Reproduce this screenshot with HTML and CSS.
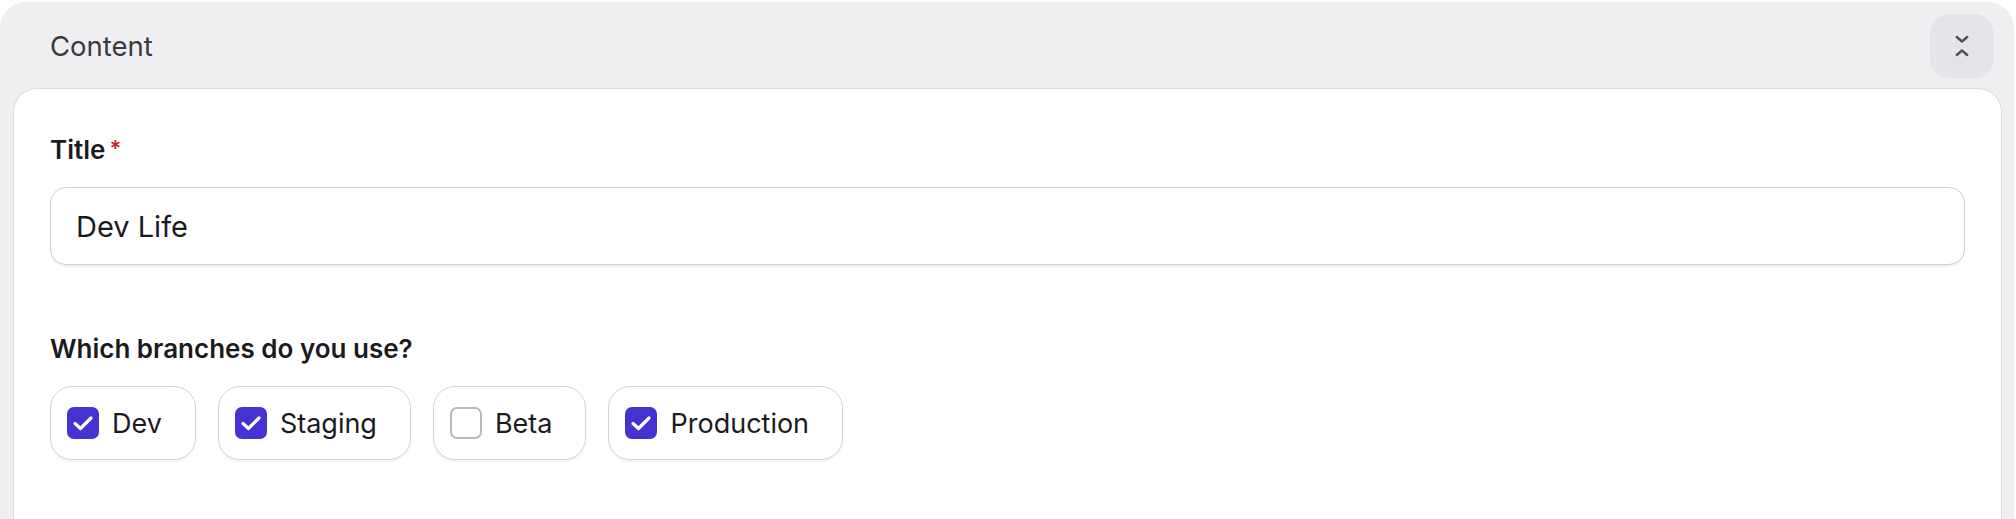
FILE: index.html
```html
<!DOCTYPE html>
<html lang="en">
<head>
  <meta charset="UTF-8">
  <meta name="viewport" content="width=device-width, initial-scale=1">
  <title>Content</title>
  <link rel="stylesheet" href="styles.css">
</head>
<body>
  <section class="panel">
    <header class="panel-header">
      <h2>Content</h2>
      <button class="collapse-btn" aria-label="Collapse">
        <svg width="14" height="22" viewBox="0 0 14 22" fill="none" stroke="#4f4f55" stroke-width="2.4" stroke-linecap="round" stroke-linejoin="round">
          <path d="M1.8 2 L7 6.5 L12.2 2"/>
          <path d="M1.8 20 L7 15.5 L12.2 20"/>
        </svg>
      </button>
    </header>

    <div class="card">
      <div class="field">
        <label class="field-label" for="title">Title<span class="required">*</span></label>
        <input class="text-input" id="title" type="text" value="Dev Life">
      </div>

      <div class="field">
        <div class="field-label">Which branches do you use?</div>
        <div class="options">
          <label class="option"><span class="box checked"></span>Dev</label>
          <label class="option"><span class="box checked"></span>Staging</label>
          <label class="option"><span class="box"></span>Beta</label>
          <label class="option"><span class="box checked"></span>Production</label>
        </div>
      </div>
    </div>
  </section>
</body>
</html>
```

FILE: styles.css
```css
* { box-sizing: border-box; }

body {
  margin: 0;
  background: #ffffff;
  font-family: 'Inter', 'Noto Sans', sans-serif;
  color: #1b1b1f;
}

.panel {
  margin: 2px 2px 0 0;
  background: #efeff1;
  border-radius: 26px 26px 0 0;
  padding: 0 12px 0 13px;
  min-height: 560px;
}

.panel-header {
  display: flex;
  align-items: center;
  justify-content: space-between;
  padding: 12px 8px 10px 37px;
}

.panel-header h2 {
  margin: 0;
  font-size: 27.5px;
  font-weight: 400;
  color: #3a3a40;
}

.collapse-btn {
  width: 64px;
  height: 64px;
  border: none;
  border-radius: 20px;
  background: #e4e4e9;
  display: flex;
  align-items: center;
  justify-content: center;
  padding: 0;
  cursor: pointer;
}

.card {
  background: #ffffff;
  border: 1px solid #dcdce0;
  border-bottom: none;
  border-radius: 24px 24px 0 0;
  padding: 45px 36px 60px 36px;
  min-height: 480px;
}

.field + .field {
  margin-top: 68px;
}

.field-label {
  display: block;
  font-size: 26px;
  line-height: 32px;
  font-weight: 600;
  color: #1b1b1f;
}

.required {
  color: #c8232c;
  margin-left: 4px;
  font-size: 22px;
  vertical-align: top;
  position: relative;
  top: -2px;
}

.text-input {
  display: block;
  width: 100%;
  height: 78px;
  margin-top: 21px;
  padding: 0 25px;
  border: 1.5px solid #cfcfd2;
  border-radius: 16px;
  box-shadow: 0 2px 2px rgba(0, 0, 0, 0.06);
  font-family: inherit;
  font-size: 29px;
  color: #1b1b1f;
  outline: none;
}

.options {
  display: flex;
  gap: 22px;
  margin-top: 21px;
}

.option {
  display: flex;
  align-items: center;
  gap: 13px;
  height: 74px;
  padding: 0 33px 0 16px;
  border: 1.5px solid #d3d3d6;
  border-radius: 22px;
  box-shadow: 0 2px 2px rgba(0, 0, 0, 0.06);
  font-size: 27px;
  color: #1b1b1f;
}

.box {
  width: 32px;
  height: 32px;
  border-radius: 7px;
  border: 2px solid #b9b9be;
  background: #ffffff;
  flex: none;
}

.box.checked {
  border: none;
  background: #4532d0 url("data:image/svg+xml;utf8,<svg xmlns='http://www.w3.org/2000/svg' width='32' height='32' viewBox='0 0 32 32'><path d='M8 16.5 L13.5 21.5 L24 11' fill='none' stroke='white' stroke-width='3.2' stroke-linecap='round' stroke-linejoin='round'/></svg>") center / 32px 32px no-repeat;
}
```
